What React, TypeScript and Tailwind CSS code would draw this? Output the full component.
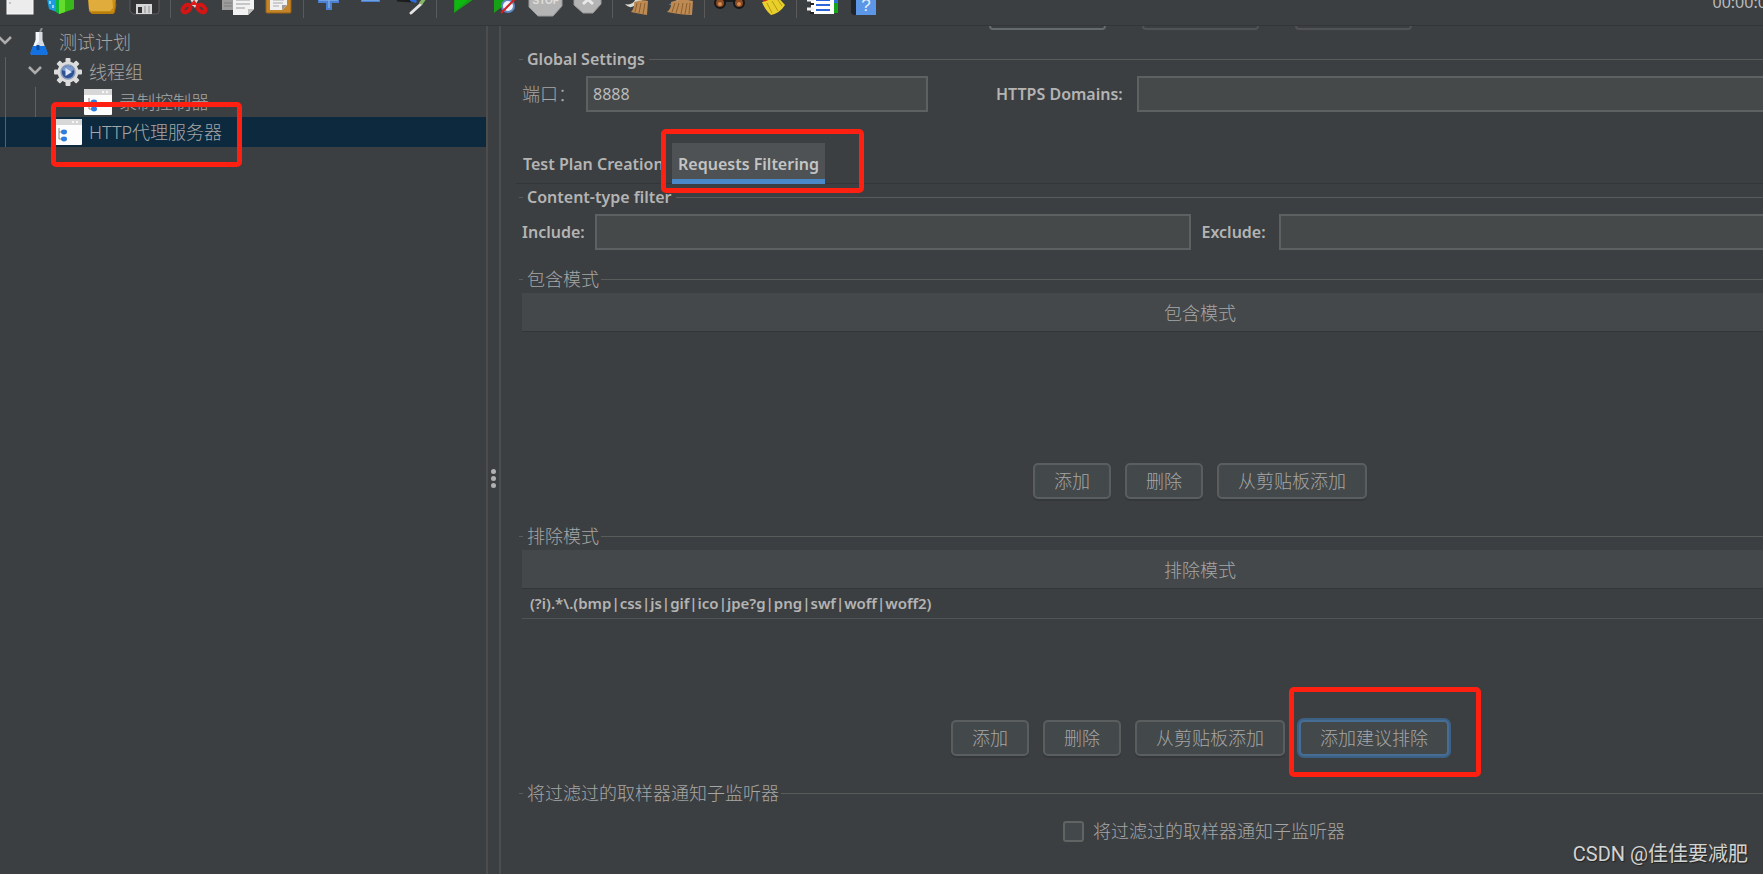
import React from "react";

const LATIN = "font-['Noto_Sans','Noto_Sans_CJK_SC',sans-serif]";

function Mark({ className }: { className: string }) {
  return (
    <span
      aria-hidden="true"
      className={"pointer-events-none absolute z-10 rounded-[5px] border-5 border-[#ff2012] " + className}
    />
  );
}

function Tool({ label, children }: { label: string; children: React.ReactNode }) {
  return (
    <button type="button" aria-label={label} className="h-[26px] w-[42px] shrink-0">
      <svg width="42" height="26" viewBox="0 0 42 26" fill="none" aria-hidden="true">
        {children}
      </svg>
    </button>
  );
}

function Sep({ wide }: { wide?: boolean }) {
  return (
    <span className={"flex h-[18px] shrink-0 justify-center " + (wide ? "w-2" : "w-[7px]")}>
      <span className="w-px bg-[#5a5a5a]" />
    </span>
  );
}

function Toolbar() {
  return (
    <header className="relative flex h-[26px] shrink-0 overflow-hidden border-b border-[#333638]">
      <div className="-ml-px flex">
        <Tool label="新建">
          <rect x="8" y="-14" width="26" height="28" fill="#ececec" stroke="#fafafa" />
          <path d="M11 2v2" stroke="#999" />
        </Tool>
        <Tool label="模板">
          <path d="M5 -6l13 4v15l-10-4z" fill="#1c9be0" />
          <path d="M9 1v3M12 5v3" stroke="#b9e4ff" strokeWidth="1.5" />
          <path d="M18 -2l15-5v16l-15 5z" fill="#39b81a" />
          <path d="M18 -2l6-2v16l-6 2z" fill="#63dc2d" />
          <path d="M15 12l3 2V-2h-3z" fill="#0fb53a" />
        </Tool>
        <Tool label="打开">
          <path d="M5 -6h24l4 4-1 14-2 2H9l-3-3z" fill="#c98d14" />
          <path d="M5 -6h24l1 14-3 3H8l-2-2z" fill="#e0ad3c" />
          <path d="M9 13h22l2-9" stroke="#a87008" />
        </Tool>
        <Tool label="保存">
          <path d="M5 -6h29v17q0 3-3 3H8l-3-3z" fill="#343436" stroke="#5a5a5c" />
          <rect x="11" y="4" width="16" height="10" fill="#d6d6d6" />
          <rect x="13" y="7" width="4" height="6" fill="#333" />
          <path d="M20 6v7M24 6v7" stroke="#b2b2b2" strokeWidth="2" />
        </Tool>
        <Sep />
        <Tool label="剪切">
          <path d="M15 -6l7 13M26 -6l-7 12" stroke="#d9d9d9" strokeWidth="3" />
          <ellipse cx="12.500" cy="8.500" rx="4.500" ry="3" transform="rotate(-40 12.500 8.500)" stroke="#d51414" strokeWidth="4" />
          <ellipse cx="27.500" cy="8.500" rx="4.500" ry="3" transform="rotate(40 27.500 8.500)" stroke="#d51414" strokeWidth="4" />
          <path d="M20 0l-4 5h8z" fill="#e01b1b" />
        </Tool>
        <Tool label="复制">
          <path d="M6 -8h16V10H6z" fill="#9c9c9c" />
          <path d="M8 3h8M8 6h8" stroke="#7e7e7e" />
          <path d="M17 -6h21V9l-6 6H17z" fill="#f2f2f2" />
          <path d="M20 0h14M20 4h14M20 8h9" stroke="#b9b9b9" strokeWidth="1.5" />
          <path d="M38 9l-6 6v-6z" fill="#bdbdbd" />
        </Tool>
        <Tool label="粘贴">
          <rect x="8" y="-14" width="25" height="27" rx="1" fill="#c4842a" stroke="#9a6212" />
          <path d="M12 -8h17V5l-5 5H12z" fill="#f0f0f0" />
          <path d="M15 0h11M15 3h10M15 6h6" stroke="#aaa" />
          <path d="M29 5l-5 5V5z" fill="#9b9b9b" />
        </Tool>
        <Sep />
        <Tool label="展开">
          <path d="M19 -9h6v7h7v5h-7v7h-6V3h-8v-5h8z" fill="#4a80cf" />
          <path d="M22 -8v16M12 0h19" stroke="#7faae8" strokeWidth="1.5" />
        </Tool>
        <Tool label="收起">
          <rect x="12" y="-3" width="19" height="5" fill="#4a80cf" />
          <path d="M13 0h17" stroke="#7faae8" strokeWidth="1.5" />
        </Tool>
        <Tool label="切换">
          <path d="M6 0l14 1" stroke="#1d1d1d" strokeWidth="3" />
          <path d="M20 -3l6 4-1 2-6-2z" fill="#2c6fe0" />
          <path d="M20 13L30 4" stroke="#e4e4e4" strokeWidth="3" strokeLinecap="round" />
          <path d="M28 3l5-7 3 2-5 7z" fill="#86b766" />
        </Tool>
        <Sep />
        <Tool label="启动">
          <path d="M14 -16v29L34 -1z" fill="#16a016" />
          <path d="M15 -10v21L29 -1z" fill="#0fb810" />
        </Tool>
        <Tool label="不停顿开始">
          <path d="M12 -16v29L30 -1z" fill="#16a016" />
          <circle cx="26" cy="6" r="6" fill="#f1f4fa" stroke="#5f88c2" strokeWidth="2" />
          <path d="M19 13L33 -1" stroke="#d42020" strokeWidth="2" />
        </Tool>
        <Tool label="停止">
          <path d="M12 -18h18l8 8v16l-9 10H14L5 7v-17z" fill="#b4b4b4" stroke="#9a9a9a" />
          <text x="22" y="4" textAnchor="middle" fill="#dedede" fontSize="10" fontWeight="700" fontFamily="Liberation Sans">
            STOP
          </text>
        </Tool>
        <Tool label="关闭">
          <path d="M14 -14h16l5 6V4l-8 9H17L8 5v-13z" fill="#b4b4b4" stroke="#9a9a9a" />
          <path d="M17 4l10-9M27 4l-10-9" stroke="#e8e8e8" strokeWidth="3" />
        </Tool>
        <Sep wide />
        <Tool label="清除">
          <path d="M9 4q8 2 11-6l3-4 5 4-4 5-6 3q-5 3-9-2z" fill="#d8dbd6" />
          <path d="M18 2q8-3 14-1l-1 14q-6-1-16-3 4-4 3-10z" fill="#bd8a54" />
          <path d="M21 3l-2 9M25 3l-2 10M29 3l-2 11" stroke="#8d5e2d" />
        </Tool>
        <Tool label="清除全部">
          <path d="M9 4q8 1 11-6l3-4 5 4-4 5-8 2z" fill="#c9c9c9" />
          <path d="M13 2q11-4 22-1l-1 14q-10 0-25-3 5-4 4-10z" fill="#bd8a54" />
          <path d="M17 3l-3 9M21 3l-3 10M25 3l-2 11M29 3l-2 11M32 3l-1 11" stroke="#8d5e2d" />
        </Tool>
        <Sep wide />
        <Tool label="搜索">
          <path d="M8 2l4-12h7l2 9 2-9h7l5 12z" fill="#1c1c1c" />
          <circle cx="12" cy="3" r="5" fill="#8a4a22" stroke="#161616" strokeWidth="2" />
          <circle cx="31" cy="3" r="5" fill="#8a4a22" stroke="#161616" strokeWidth="2" />
          <circle cx="12" cy="4" r="2" fill="#d18a52" />
          <circle cx="31" cy="4" r="2" fill="#d18a52" />
        </Tool>
        <Tool label="重置搜索">
          <path d="M11 -3L25 -9l3 6-14 6z" fill="#c8281c" />
          <path d="M12 2q8-1 13-8l10 11q-5 8-14 10-6-5-9-13z" fill="#e8cf2c" />
          <path d="M17 3l5 10M22 1l6 10M26 -3l6 9" stroke="#b49a12" />
        </Tool>
        <Sep wide />
        <Tool label="函数助手">
          <rect x="31" y="-10" width="7" height="13" fill="#2f6fe0" />
          <rect x="31" y="3" width="7" height="10" fill="#15a51b" />
          <path d="M11 -14h23v28H11z" fill="#fff" />
          <path d="M16 0h14M16 5h14M16 10h14" stroke="#2c65d8" strokeWidth="2" />
          <path d="M7 0h7M7 9h7" stroke="#f0f0f0" strokeWidth="3" />
          <path d="M10 4h4M10 13h4" stroke="#222" strokeWidth="2" />
        </Tool>
        <Tool label="帮助">
          <path d="M9 -12h7v27h-5l-2-2z" fill="#20242b" />
          <rect x="14" y="-12" width="20" height="27" fill="#5b97e6" />
          <text x="24" y="11" textAnchor="middle" fill="#e6f1ff" fontSize="17" fontFamily="Liberation Sans">
            ?
          </text>
        </Tool>
      </div>
      <div className="ml-auto mr-[-13px] flex h-5 -translate-y-2 items-center whitespace-nowrap text-base text-[#bbb]">
        00:00:00
      </div>
    </header>
  );
}

function Chevron() {
  return (
    <svg width="14" height="10" viewBox="0 0 14 10" fill="none" aria-hidden="true" className="shrink-0">
      <path d="M1 2l6 6 6-6" stroke="#adadad" strokeWidth="2.5" />
    </svg>
  );
}

function WindowIcon() {
  return (
    <svg width="28" height="26" viewBox="0 0 28 26" aria-hidden="true" className="shrink-0">
      <rect width="28" height="26" rx="1" fill="#fdfdfd" />
      <path d="M0 1q0-1 1-1h26q1 0 1 1v5H0z" fill="#d7d7d7" />
      <path d="M18 3h2M22 3h2" stroke="#f6f6f6" strokeWidth="2" />
      <path d="M5 9v11h4M5 13h4" stroke="#8a8a8a" fill="none" />
      <ellipse cx="10" cy="13" rx="3" ry="2.4" fill="#2f7ddd" />
      <ellipse cx="10" cy="20" rx="3" ry="2.4" fill="#2f7ddd" />
    </svg>
  );
}

function FlaskIcon() {
  return (
    <svg width="20" height="28" viewBox="0 0 20 28" aria-hidden="true" className="shrink-0">
      <path d="M11 4l2-4" stroke="#8c8c8c" strokeWidth="2" />
      <path d="M6.500 4h7v8l4.500 12q1 3-2 3H4q-3 0-2-3l4.500-12z" fill="#d5dbe2" />
      <path d="M7 4h3v9L6 19H4l3-7z" fill="#f5f7fa" />
      <path d="M4 18h12l2.500 6q1 3-2 3H3.500q-3 0-2-3z" fill="#1471e0" />
      <path d="M9 17v5" stroke="#0b4ca8" strokeWidth="3" />
    </svg>
  );
}

function GearIcon() {
  return (
    <svg width="28" height="28" viewBox="0 0 28 28" aria-hidden="true" className="shrink-0">
      <g fill="#dcdcdc">
        <circle cx="14" cy="14" r="10.5" />
        <rect x="11.5" y="0" width="5" height="28" rx="1" />
        <rect x="11.5" y="0" width="5" height="28" rx="1" transform="rotate(45 14 14)" />
        <rect x="11.5" y="0" width="5" height="28" rx="1" transform="rotate(90 14 14)" />
        <rect x="11.5" y="0" width="5" height="28" rx="1" transform="rotate(135 14 14)" />
      </g>
      <circle cx="14" cy="14" r="7" fill="#2e5293" stroke="#8a9cbb" strokeWidth="1.5" />
      <path d="M8 12a6.500 6.500 0 0 1 12 0q-6 3-12 0z" fill="#7d9ccc" />
      <path d="M11.500 10v8l6.500-4z" fill="#dbe7f7" />
    </svg>
  );
}

function Tree() {
  return (
    <nav className="w-[486px] shrink-0 overflow-hidden pt-px">
      <ul className="text-lg font-light text-[#a6a6a6]">
        <li>
          <div className="flex h-[30px] items-center">
            <span className="-ml-[2px] mr-[17px] mt-[-4px]"><Chevron /></span>
            <FlaskIcon />
            <span className="ml-[10px]">测试计划</span>
          </div>
          <ul className="relative">
            <span className="absolute left-[5px] top-0 z-[1] h-[90px] w-px bg-[#5d5f61]" />
            <li>
              <div className="flex h-[30px] items-center pl-7">
                <span className="mr-[12px] mt-[-4px]"><Chevron /></span>
                <GearIcon />
                <span className="ml-[7px]">线程组</span>
              </div>
              <ul className="relative">
                <span className="absolute left-[35px] top-0 h-[30px] w-px bg-[#5d5f61]" />
                <li className="flex h-[30px] items-center pl-[84px]">
                  <WindowIcon />
                  <span className="ml-[7px]">录制控制器</span>
                </li>
              </ul>
            </li>
            <li className="relative flex h-[30px] items-center bg-[#0d293e] pl-[54px]">
              <WindowIcon />
              <span className="ml-[7px]">HTTP代理服务器</span>
              <Mark className="left-[51px] top-[-15px] h-[65px] w-[191px]" />
            </li>
          </ul>
        </li>
      </ul>
    </nav>
  );
}

function Title({ children, cjk }: { children: React.ReactNode; cjk?: boolean }) {
  return (
    <div className="flex h-6 items-center pl-[3px]">
      <span className="h-px w-1 bg-[#5a5b5b]" />
      <h2
        className={
          "ml-1 whitespace-nowrap " +
          (cjk ? "mr-[2px] text-lg font-light text-[#a6a6a6]" : "mr-1 text-base font-semibold text-[#b4b4b4]")
        }
      >
        {children}
      </h2>
      <span className="h-px flex-1 bg-[#5a5b5b]" />
    </div>
  );
}

const FIELD = "h-9 min-w-0 border-2 border-[#5e6162] bg-[#45494a] px-[5px] text-base text-[#bbb] outline-none";

function Btn({ children, focused }: { children: React.ReactNode; focused?: boolean }) {
  return (
    <button
      type="button"
      className={
        "relative h-9 rounded-[5px] border-2 bg-[#43484a] px-[19px] text-lg font-light whitespace-nowrap text-[#a6a6a6] " +
        (focused
          ? "border-[#466d94] shadow-[0_0_0_2px_#3d6185]"
          : "border-[#5b5e5e] shadow-[0_2px_1px_#35383a]")
      }
    >
      {children}
      {focused && <Mark className="left-[-12px] top-[-35px] h-[90px] w-[192px]" />}
    </button>
  );
}

function PatternSection({ title, rows, children }: { title: string; rows: string[]; children: React.ReactNode }) {
  return (
    <section className="pb-[25px]">
      <Title cjk>{title}</Title>
      <div className="mt-[2px] h-40 overflow-hidden px-[6px]">
        <table className="w-full border-collapse">
          <thead>
            <tr className="h-[38px] border-b border-[#333638] bg-[#44484a]">
              <th className="px-0 pt-[2px] pb-0 text-lg font-light text-[#a6a6a6]">{title}</th>
            </tr>
          </thead>
          <tbody>
            {rows.map((row) => (
              <tr key={row} className="h-[30px] border-b border-[#515354]">
                <td className="px-2 py-0 text-[15px] font-semibold text-[#b4b4b4]">{row}</td>
              </tr>
            ))}
          </tbody>
        </table>
      </div>
      <div className="mt-[10px] flex justify-center gap-[14px]">{children}</div>
    </section>
  );
}

function Panel() {
  return (
    <main className="min-w-0 flex-1 overflow-hidden pl-[15px]">
      <div className="w-[calc(100%+121px)]">
        <div className="flex h-1 items-end justify-center gap-9 overflow-hidden">
          <button type="button" aria-label="启动" className="h-9 w-[117px] shrink-0 rounded-[4px] border-2 border-[#646c6b]" />
          <button type="button" aria-label="停止" className="h-9 w-[117px] shrink-0 rounded-[4px] border-2 border-[#505253]" />
          <button type="button" aria-label="重启" className="h-9 w-[117px] shrink-0 rounded-[4px] border-2 border-[#505253]" />
        </div>

        <section className="pt-[17px]">
          <Title>Global Settings</Title>
          <div className="mt-[5px] flex items-center pl-[6px]">
            <label htmlFor="port" className="w-16 text-lg font-light text-[#a6a6a6]">端口：</label>
            <input id="port" defaultValue="8888" className={FIELD + " w-[342px]"} />
            <label htmlFor="domains" className="ml-[68px] w-[141px] text-base font-semibold text-[#b4b4b4]">HTTPS Domains:</label>
            <input id="domains" className={FIELD + " flex-1"} />
          </div>
        </section>

        <div role="tablist" className="mt-[31px] flex h-[41px] border-b border-[#333638] text-base font-semibold text-[#b4b4b4]">
          <button type="button" role="tab" aria-selected="false" className="w-[156px] whitespace-nowrap pt-[2px] pl-[7px] text-left">
            Test Plan Creation
          </button>
          <button
            type="button"
            role="tab"
            aria-selected="true"
            className="relative -mb-px h-[41px] w-[153px] border-b-5 border-[#4a88c7] bg-[#4e5254] pt-[5px] text-center whitespace-nowrap text-[#c4c4c4]"
          >
            Requests Filtering
            <Mark className="left-[-11px] top-[-14px] h-16 w-[203px]" />
          </button>
        </div>

        <section className="pt-px">
          <Title>Content-type filter</Title>
          <div className="mt-[5px] flex items-center gap-[11px] pr-[14px] pl-[6px] text-base font-semibold text-[#b4b4b4]">
            <div className="flex flex-1 items-center">
              <label htmlFor="include" className="w-[73px]">Include:</label>
              <input id="include" className={FIELD + " flex-1"} />
            </div>
            <div className="flex flex-1 items-center">
              <label htmlFor="exclude" className="w-[77px]">Exclude:</label>
              <input id="exclude" className={FIELD + " flex-1"} />
            </div>
          </div>
        </section>

        <div className="pt-[17px]">
          <PatternSection title="包含模式" rows={[]}>
            <Btn>添加</Btn>
            <Btn>删除</Btn>
            <Btn>从剪贴板添加</Btn>
          </PatternSection>
          <PatternSection title="排除模式" rows={["(?i).*\\.(bmp|css|js|gif|ico|jpe?g|png|swf|woff|woff2)"]}>
            <Btn>添加</Btn>
            <Btn>删除</Btn>
            <Btn>从剪贴板添加</Btn>
            <Btn focused>添加建议排除</Btn>
          </PatternSection>
        </div>

        <section>
          <Title cjk>将过滤过的取样器通知子监听器</Title>
          <div className="flex justify-center pt-3 pl-2">
            <label className="flex items-center gap-[9px] text-lg font-light text-[#a6a6a6]">
              <input
                type="checkbox"
                className="size-[21px] appearance-none rounded-[3px] border-2 border-[#606463] bg-[#43484a]"
              />
              将过滤过的取样器通知子监听器
            </label>
          </div>
        </section>
      </div>
    </main>
  );
}

export default function App() {
  return (
    <div className={"relative flex h-screen flex-col overflow-hidden bg-[#3c3f41] " + LATIN}>
      <Toolbar />
      <div className="flex min-h-0 flex-1">
        <Tree />
        <div className="flex w-[15px] shrink-0 flex-col items-center justify-center gap-[2px] border-x-2 border-[#4e4d4d] pt-14">
          <span className="size-[5px] rounded-full bg-[#b0b0b0]" />
          <span className="size-[5px] rounded-full bg-[#b0b0b0]" />
          <span className="size-[5px] rounded-full bg-[#b0b0b0]" />
        </div>
        <Panel />
      </div>
      <div className="absolute right-[15px] bottom-[6px] font-['Roboto','Noto_Sans_CJK_SC',sans-serif] text-xl text-[#d2d3d3] [text-shadow:1px_1px_1px_#222]">
        CSDN @佳佳要减肥
      </div>
    </div>
  );
}
